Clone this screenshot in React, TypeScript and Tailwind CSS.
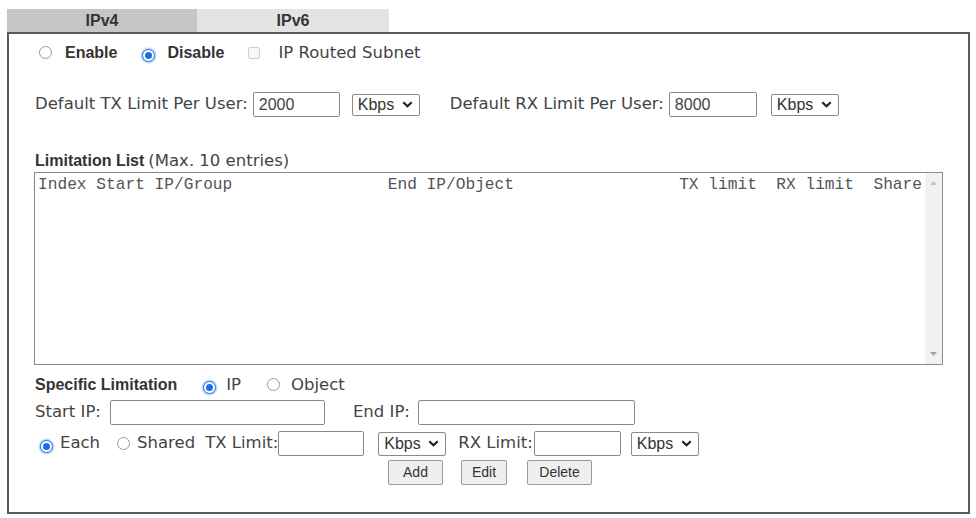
import * as React from 'react'

const Radio = ({ checked }: { checked?: boolean }) =>
    checked ? (
        <span className="inline-flex h-[13px] w-[13px] shrink-0 items-center justify-center rounded-full border-[1.5px] border-[#1a6fe0] bg-white shadow-[0_0_0_1.5px_#c3d9f7]">
            <span className="h-[7px] w-[7px] rounded-full bg-[#1a6fe0]" />
        </span>
    ) : (
        <span className="inline-block h-[13px] w-[13px] shrink-0 rounded-full border border-[#9a9a9a] bg-white" />
    )

const Select = ({ className = '' }: { className?: string }) => (
    <div
        className={`flex h-[22px] w-[68px] shrink-0 items-center justify-between rounded-[2px] border border-[#8a8a8a] bg-white pl-[5px] pr-[6px] font-['Liberation_Sans'] text-[16px] text-[#333] ${className}`}
    >
        <span>Kbps</span>
        <svg width="11" height="7" viewBox="0 0 11 7">
            <path d="M1.3 1.3 5.5 5.3 9.7 1.3" fill="none" stroke="#222" strokeWidth="2.2" />
        </svg>
    </div>
)

const TextBox = ({ value = '', className = '' }: { value?: string; className?: string }) => (
    <input
        readOnly
        value={value}
        className={`h-[25px] shrink-0 rounded-[2px] border border-[#8a8a8a] bg-white px-[5px] font-['Liberation_Sans'] text-[16px] text-[#444] outline-none ${className}`}
    />
)

const Button = ({ text, className = '' }: { text: string; className?: string }) => (
    <button
        className={`flex h-[25px] items-center justify-center rounded-[2px] border border-[#9a9a9a] bg-[#efefef] font-['Liberation_Sans'] text-[14px] text-[#333] ${className}`}
    >
        {text}
    </button>
)

// listbox header, fixed columns
const header =
    'Index Start IP/Group                End IP/Object                 TX limit  RX limit  Share'

const App = () => {
    const bold = "font-['Liberation_Sans'] font-bold text-[16px] text-[#333]"
    const plain = "font-['DejaVu_Sans'] text-[16.5px] text-[#444]"

    return (
        <div className="h-[518px] w-[976px] bg-white pl-[7px] pt-[9px]">
            {/* tabs */}
            <div className="flex h-[23px]">
                <div className={`flex w-[190px] items-center justify-center bg-[#c6c6c6] ${bold}`}>IPv4</div>
                <div className={`flex w-[192px] items-center justify-center bg-[#e3e3e3] ${bold}`}>IPv6</div>
            </div>

            <div className="flex h-[482px] w-[963px] flex-col border-2 border-[#5a5a5a] pl-[26px]">
                {/* enable row */}
                <div className="mt-[9px] flex h-[20px] items-center">
                    <span className="ml-[4px]"><Radio /></span>
                    <span className={`ml-[13px] ${bold}`}>Enable</span>
                    <span className="ml-[25px]"><Radio checked /></span>
                    <span className={`ml-[12px] ${bold}`}>Disable</span>
                    <span className="ml-[24px] inline-block h-[12px] w-[12px] rounded-[2px] border border-[#d0d0d0] bg-[#f7f7f7]" />
                    <span className={`ml-[18px] ${plain}`}>IP Routed Subnet</span>
                </div>

                {/* default limits */}
                <div className="mt-[29px] flex h-[25px] items-center">
                    <span className={plain}>Default TX Limit Per User:</span>
                    <TextBox value="2000" className="ml-[5px] w-[87px]" />
                    <Select className="ml-[12px]" />
                    <span className={`ml-[30px] ${plain}`}>Default RX Limit Per User:</span>
                    <TextBox value="8000" className="ml-[5px] w-[88px]" />
                    <Select className="ml-[14px] w-[66px]" />
                </div>

                {/* limitation list */}
                <div className="mt-[35px] flex h-[18px] items-center">
                    <span className={bold}>Limitation List</span>
                    <span className={`ml-[4px] ${plain}`}>(Max. 10 entries)</span>
                </div>
                <div className="ml-[-1px] mt-[2px] flex h-[193px] w-[909px] border border-[#8a8a8a] bg-white">
                    <pre className="flex-1 pl-[3px] pt-[3px] font-['Liberation_Mono'] text-[16.2px] leading-[18px] text-[#555]">
                        {header}
                    </pre>
                    <div className="flex w-[17px] flex-col items-center justify-between bg-[#f1f1f1] py-[8px]">
                        <svg width="7" height="4" viewBox="0 0 7 4">
                            <path d="M0 4 3.5 0 7 4Z" fill="#c2c2c2" />
                        </svg>
                        <svg width="7" height="4" viewBox="0 0 7 4">
                            <path d="M0 0 3.5 4 7 0Z" fill="#a3a3a3" />
                        </svg>
                    </div>
                </div>

                {/* specific limitation */}
                <div className="mt-[11px] flex h-[18px] items-center">
                    <span className={bold}>Specific Limitation</span>
                    <span className="ml-[26px]"><Radio checked /></span>
                    <span className={`ml-[10px] ${plain}`}>IP</span>
                    <span className="ml-[26px]"><Radio /></span>
                    <span className={`ml-[11px] ${plain}`}>Object</span>
                </div>

                <div className="mt-[6px] flex h-[25px] items-center">
                    <span className={plain}>Start IP:</span>
                    <TextBox className="ml-[9px] w-[215px]" />
                    <span className={`ml-[28px] ${plain}`}>End IP:</span>
                    <TextBox className="ml-[8px] w-[217px]" />
                </div>

                <div className="mt-[5px] flex h-[27px] items-center">
                    <span className="ml-[5px]"><Radio checked /></span>
                    <span className={`ml-[7px] ${plain}`}>Each</span>
                    <span className="ml-[17px]"><Radio /></span>
                    <span className={`ml-[7px] ${plain}`}>Shared</span>
                    <span className={`ml-[10px] ${plain}`}>TX Limit:</span>
                    <TextBox className="w-[86px]" />
                    <Select className="ml-[14px] h-[24px]" />
                    <span className={`ml-[12px] ${plain}`}>RX Limit:</span>
                    <TextBox className="ml-[1px] w-[87px]" />
                    <Select className="ml-[10px] h-[24px]" />
                </div>

                <div className="mt-[3px] flex h-[25px] items-center pl-[353px]">
                    <Button text="Add" className="w-[55px]" />
                    <Button text="Edit" className="ml-[18px] w-[46px]" />
                    <Button text="Delete" className="ml-[20px] w-[65px]" />
                </div>
            </div>
        </div>
    )
}

export default App
